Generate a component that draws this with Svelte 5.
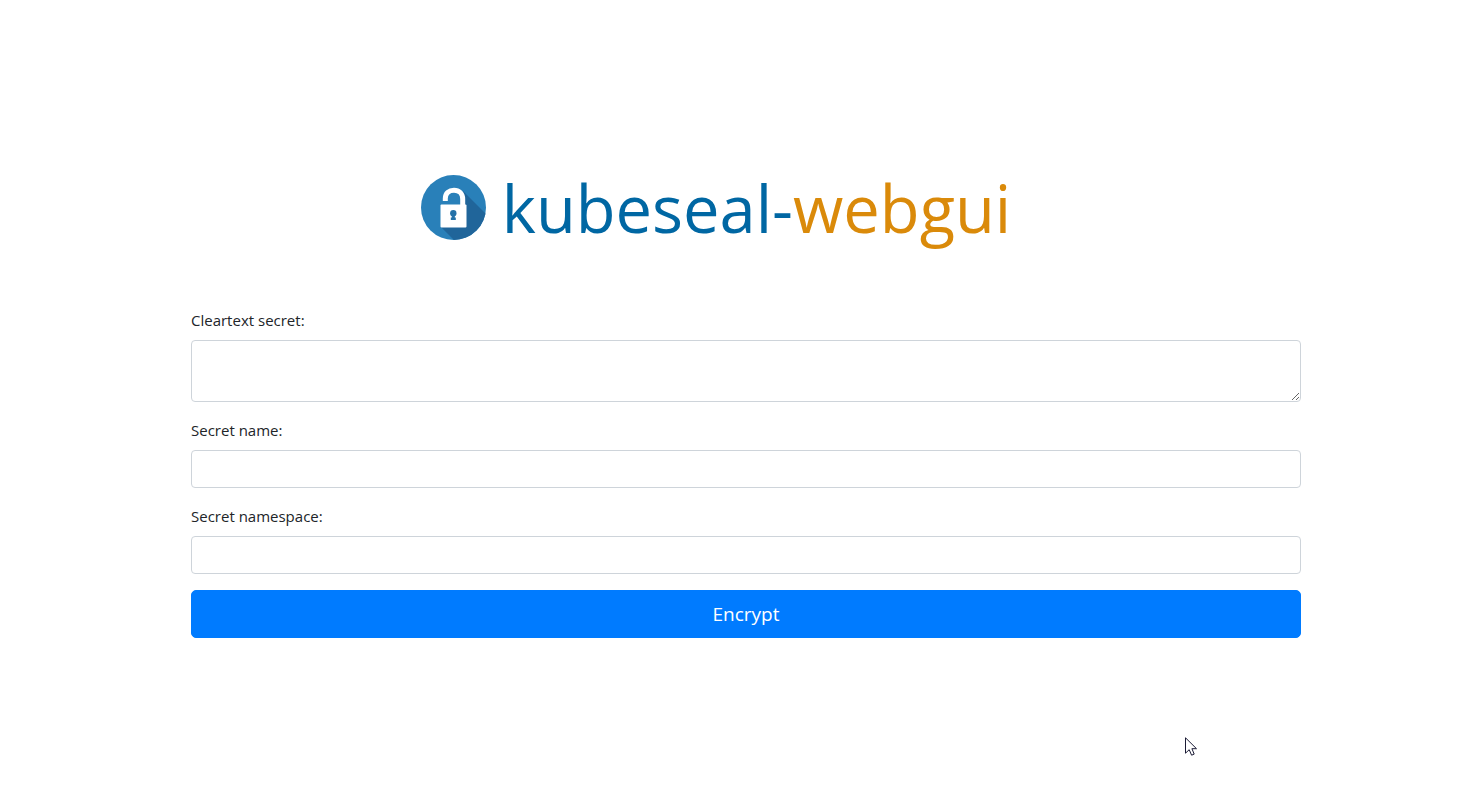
<script>
  let cleartext = $state('');
  let name = $state('');
  let namespace = $state('');
</script>

<main>
  <header>
    <svg class="logo" viewBox="0 0 66 66" aria-hidden="true">
      <defs>
        <clipPath id="disc"><circle cx="32.500" cy="32.500" r="32.500" /></clipPath>
      </defs>
      <g clip-path="url(#disc)">
        <rect width="66" height="66" fill="#2980b9" />
        <path d="M42 16L76 50V86H54L20 52L40 30Z" fill="#20659a" />
      </g>
      <path d="M27 30V28H39V30Z" fill="#2980b9" />
      <path
        d="M24.300 26V23.500C24.300 18 28 15.200 33 15.200S41.700 18.500 41.700 24V31"
        fill="none"
        stroke="#fff"
        stroke-width="5"
      />
      <rect x="19.500" y="29.500" width="26" height="23" rx="1" fill="#fff" />
      <circle cx="32.300" cy="38.300" r="3.200" fill="#2471a8" />
      <path d="M30.800 38H33.800V42.500H34.800V45H29.800V42.500H30.800Z" fill="#2471a8" />
    </svg>
    <h1>kubeseal-<span>webgui</span></h1>
  </header>

  <form onsubmit={(event) => event.preventDefault()}>
    <div class="field">
      <label for="cleartext">Cleartext secret:</label>
      <textarea id="cleartext" rows="2" bind:value={cleartext}></textarea>
    </div>
    <div class="field">
      <label for="name">Secret name:</label>
      <input id="name" type="text" bind:value={name} />
    </div>
    <div class="field">
      <label for="namespace">Secret namespace:</label>
      <input id="namespace" type="text" bind:value={namespace} />
    </div>
    <button type="submit">Encrypt</button>
  </form>
</main>

<svg class="pointer" viewBox="0 0 12 20" aria-hidden="true">
  <path
    d="M.5 .8V16.200L4.200 12.700L6.600 18.200L9.200 17.100L6.900 11.700H11.500Z"
    fill="#fff"
    stroke="#1b1b35"
  />
</svg>

<style>
  :global(body) {
    margin: 0;
    padding-left: 14px;
    background: #fff;
    color: #212529;
    font-family: 'Segoe UI', 'Open Sans', 'Noto Sans', sans-serif;
    font-size: 15px;
    line-height: 24px;
  }

  main {
    box-sizing: border-box;
    max-width: 1140px;
    margin: 0 auto;
    padding: 169px 15px 32px;
  }

  header {
    display: flex;
    align-items: center;
    justify-content: center;
    gap: 15px;
    padding-right: 60px;
    margin-bottom: 61px;
  }

  .logo {
    width: 66px;
    height: 66px;
    flex: none;
  }

  h1 {
    margin: 0;
    font-size: 65px;
    line-height: 78px;
    font-weight: 400;
    color: #0067a3;
  }

  h1 span {
    color: #da8a0a;
  }

  .field {
    display: flex;
    flex-direction: column;
    gap: 8px;
    margin-bottom: 16px;
  }

  label {
    align-self: flex-start;
  }

  input,
  textarea {
    box-sizing: border-box;
    width: 100%;
    height: 38px;
    margin: 0;
    padding: 6px 12px;
    border: 1px solid #ced4da;
    border-radius: 4px;
    background: #fff;
    color: #495057;
    font: inherit;
  }

  textarea {
    height: 62px;
    resize: vertical;
  }

  button {
    display: block;
    width: 100%;
    padding: 8px 16px;
    border: 1px solid #007bff;
    border-radius: 5px;
    background: #007bff;
    color: #fff;
    font-family: inherit;
    font-size: 19px;
    line-height: 30px;
    cursor: pointer;
  }

  .pointer {
    position: absolute;
    left: 1185px;
    top: 737px;
    width: 12px;
    height: 20px;
    pointer-events: none;
  }
</style>
